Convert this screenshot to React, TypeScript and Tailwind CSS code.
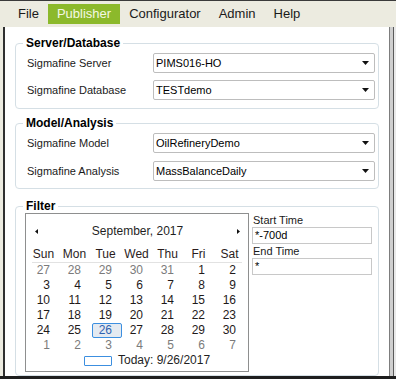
const menu = ["File", "Publisher", "Configurator", "Admin", "Help"];

const weeks = [
  [27, 28, 29, 30, 31, 1, 2],
  [3, 4, 5, 6, 7, 8, 9],
  [10, 11, 12, 13, 14, 15, 16],
  [17, 18, 19, 20, 21, 22, 23],
  [24, 25, 26, 27, 28, 29, 30],
  [1, 2, 3, 4, 5, 6, 7],
];

const days = ["Sun", "Mon", "Tue", "Wed", "Thu", "Fri", "Sat"];

const Caret = () => (
  <svg width="7" height="4" viewBox="0 0 7 4">
    <path d="M0 0h7L3.5 4z" fill="#111" />
  </svg>
);

const Select = ({ value }: { value: string }) => (
  <div className="w-[222px] h-[20px] border border-[#bdbdbd] rounded-[2px] bg-white flex items-center pl-[2px] pr-[5px] text-[11px] text-black">
    <span className="flex-1">{value}</span>
    <Caret />
  </div>
);

const Row = ({ label, value }: { label: string; value: string }) => (
  <div className="flex items-center">
    <span className="w-[126px] text-[11px] text-[#1a1a1a]">{label}</span>
    <Select value={value} />
  </div>
);

const Group = ({
  title,
  children,
  className,
}: {
  title: string;
  children: React.ReactNode;
  className: string;
}) => (
  <fieldset
    className={`mx-[10px] border border-[#d5dfe5] rounded-[4px] ${className}`}
  >
    <legend className="ml-[7px] px-[3px] text-[12px] leading-[14px] font-bold text-black">
      {title}
    </legend>
    {children}
  </fieldset>
);

const Calendar = () => (
  <div className="w-[224px] h-[159px] border border-[#8e8f8f] bg-white pt-[9px] pb-[3px] text-[12px]">
    <div className="h-[16px] flex items-center justify-between pl-[9px] pr-[8px]">
      <svg width="3" height="5" viewBox="0 0 3 5">
        <path d="M3 0v5L0 2.5z" fill="#111" />
      </svg>
      <span className="leading-[16px] text-[#1f1f1f]">September, 2017</span>
      <svg width="3" height="5" viewBox="0 0 3 5">
        <path d="M0 0v5l3-2.5z" fill="#111" />
      </svg>
    </div>
    <div className="mt-[7px] pl-[2px] grid grid-cols-[repeat(7,31px)] h-[16px] leading-[16px] text-[#2a1c1c]">
      {days.map((d) => (
        <span key={d} className="text-center">
          {d}
        </span>
      ))}
    </div>
    <div className="mx-[6px] border-t border-[#e2e2e2]" />
    <div className="pl-[2px] grid grid-cols-[repeat(7,31px)]">
      {weeks.map((w, wi) =>
        w.map((n, di) => {
          const other = (wi === 0 && n > 20) || (wi === 5 && n < 10);
          if (wi === 4 && n === 26) {
            return (
              <div key={`${wi}-${di}`} className="h-[15px]">
                <div className="ml-[2px] w-[30px] h-[15px] border border-[#3c8fe0] rounded-[2px] bg-[#e4eaf1] text-right pr-[9px] leading-[13px] text-[#2f62b0]">
                  26
                </div>
              </div>
            );
          }
          return (
            <div
              key={`${wi}-${di}`}
              className={`h-[15px] leading-[15px] text-right pr-[9px] ${
                other ? "text-[#7b7b7b]" : "text-[#1f1a1a]"
              }`}
            >
              {n}
            </div>
          );
        })
      )}
    </div>
    <div className="h-[15px] flex items-center pl-[58px] gap-[6px]">
      <span className="w-[28px] h-[10px] border-[1.5px] border-[#3c8fe0] rounded-[1px]" />
      <span className="leading-[15px] text-[#1f1f1f]">Today: 9/26/2017</span>
    </div>
  </div>
);

const App = () => {
  return (
    <div className="w-[396px] h-[379px] flex flex-col bg-[#ecebe0] border-t border-[#3a3a3a] border-b-[3px] border-b-[#1e1e1e] font-['Liberation_Sans',Arial,sans-serif] overflow-hidden">
      <div className="h-[26px] flex items-center pl-[9px] text-[13px]">
        {menu.map((m) => (
          <span
            key={m}
            className={`h-[20px] leading-[20px] px-[9px] ${
              m === "Publisher"
                ? "bg-[#8cb92b] text-[#f4f8e4]"
                : "text-[#1a1a1a]"
            }`}
          >
            {m}
          </span>
        ))}
      </div>
      <div className="flex-1 flex">
        <div className="w-[3px]" />
        <div className="flex-1 bg-white border-l-2 border-[#2f2f2f] border-r border-r-[#7d7d7d] pt-[9px]">
          <Group title="Server/Database" className="pb-[8px]">
            <div className="mt-[3px] pl-[11px] pr-[3px] flex flex-col gap-[7px]">
              <Row label="Sigmafine Server" value="PIMS016-HO" />
              <Row label="Sigmafine Database" value="TESTdemo" />
            </div>
          </Group>
          <Group title="Model/Analysis" className="mt-[7px] pb-[7px]">
            <div className="mt-[3px] pl-[11px] pr-[3px] flex flex-col gap-[8px]">
              <Row label="Sigmafine Model" value="OilRefineryDemo" />
              <Row label="Sigmafine Analysis" value="MassBalanceDaily" />
            </div>
          </Group>
          <Group title="Filter" className="mt-[10px] pb-[3px]">
            <div className="flex pl-[9px]">
              <Calendar />
              <div className="ml-[3px] w-[120px] text-[11px] text-[#1a1a1a]">
                <div className="pl-[1px] leading-[14px] h-[14px]">Start Time</div>
                <div className="h-[17px] border border-[#c8c8c8] pl-[2px] leading-[15px] text-black">
                  *-700d
                </div>
                <div className="pl-[1px] leading-[14px] h-[14px]">End Time</div>
                <div className="h-[17px] border border-[#c8c8c8] pl-[2px] leading-[15px] text-black">
                  *
                </div>
              </div>
            </div>
          </Group>
        </div>
        <div className="w-[3px] bg-[#cfcfcf]" />
        <div className="w-[1px] bg-[#5a5a5a]" />
        <div className="w-[2px] bg-[#e9e9e9]" />
      </div>
    </div>
  );
};

export default App;
